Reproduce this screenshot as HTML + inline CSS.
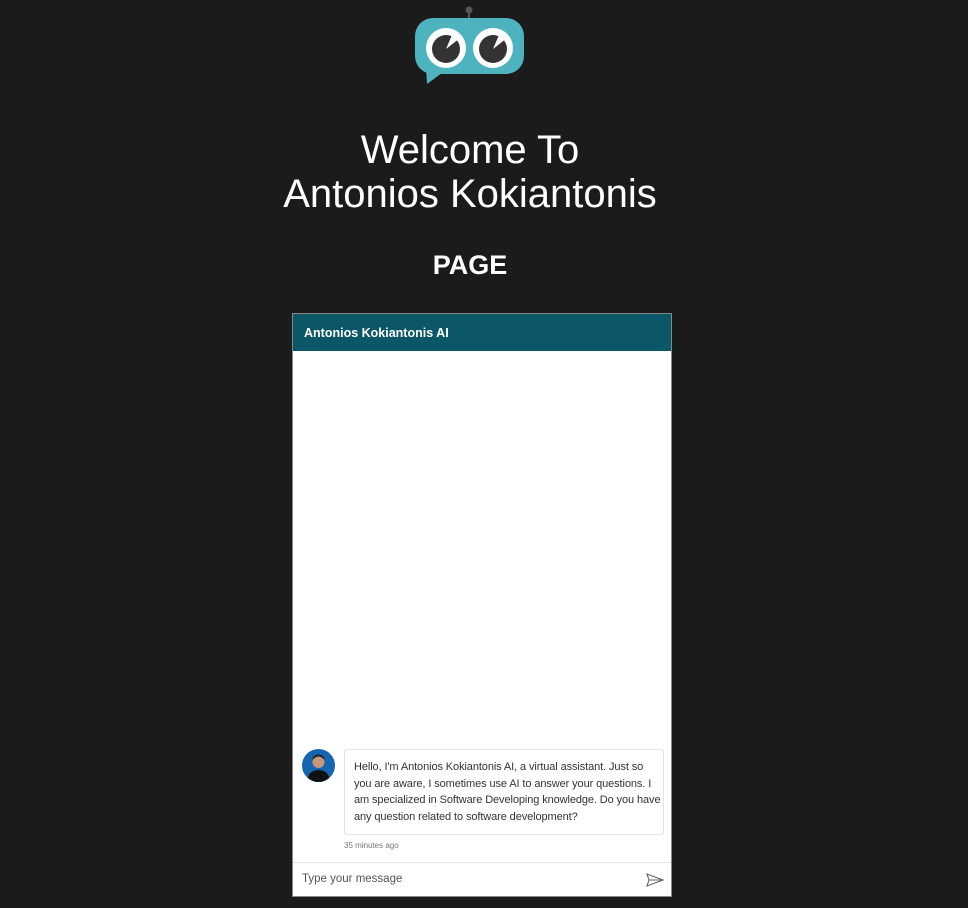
<!DOCTYPE html>
<html><head><meta charset="utf-8"><style>
body{margin:0;width:968px;height:908px;background:#1b1b1b;font-family:"Liberation Sans",sans-serif;position:relative;overflow:hidden}
.h1{position:absolute;left:0;width:940px;top:128px;text-align:center;color:#fff;font-size:40px;line-height:44px}
.h2{position:absolute;left:0;width:940px;top:250px;text-align:center;color:#fff;font-size:27px;font-weight:bold}
.chat{position:absolute;left:292px;top:313px;width:378px;height:582px;background:#fff;border:1px solid #888}
.hd{height:37px;background:#0b5667;color:#fff;font-weight:bold;font-size:12.5px;line-height:38px;padding-left:11px;font-family:"Liberation Sans",sans-serif}
.av{position:absolute;left:9px;top:435px;width:33px;height:33px;border-radius:50%;background:#1565b0;overflow:hidden}
.msg{position:absolute;left:51px;top:435px;width:300px;height:66px;border:1px solid #e3e3e3;border-radius:3px;padding:9px 9px;font-size:11px;line-height:16.6px;color:#333;font-family:"Liberation Sans",sans-serif;white-space:nowrap;letter-spacing:-0.1px}
.time{position:absolute;left:51px;top:527px;font-size:8px;color:#777;font-family:"Liberation Sans",sans-serif}
.inp{position:absolute;left:0;top:548px;width:378px;height:34px;border-top:1px solid #e3e3e3}
.inp span{position:absolute;left:9px;top:10px;font-size:11.5px;color:#555;font-family:"Liberation Sans",sans-serif}
</style></head><body>
<svg style="position:absolute;left:414px;top:4px" width="112" height="80" viewBox="0 0 112 80">
<line x1="55" y1="4" x2="55" y2="14" stroke="#555" stroke-width="2"/><circle cx="55" cy="6" r="3.5" fill="#555"/>
<rect x="1" y="14" width="109" height="56" rx="18" fill="#4db3bf"/>
<path d="M12 62 L13 80 L32 66 Z" fill="#4db3bf"/>
<circle cx="32" cy="44" r="20" fill="#fff"/><circle cx="32" cy="45" r="14" fill="#333"/>
<path d="M32 45 L46 34 L38 31Z" fill="#fff"/>
<circle cx="79" cy="44" r="20" fill="#fff"/><circle cx="79" cy="45" r="14" fill="#333"/>
<path d="M79 45 L93 34 L85 31Z" fill="#fff"/>
</svg>
<div class="h1">Welcome To<br>Antonios Kokiantonis</div>
<div class="h2">PAGE</div>
<div class="chat">
<div class="hd">Antonios Kokiantonis AI</div>
<div class="av"><svg width="33" height="33"><circle cx="16.5" cy="13" r="6" fill="#c9967a"/><path d="M5 33 Q6 21 16.5 21 Q27 21 28 33Z" fill="#111"/><path d="M10.5 11 Q16.5 4 22.5 11 L22 8 Q16.5 3 11 8Z" fill="#222"/></svg></div>
<div class="msg">Hello, I'm Antonios Kokiantonis AI, a virtual assistant. Just so<br>you are aware, I sometimes use AI to answer your questions. I<br>am specialized in Software Developing knowledge. Do you have<br>any question related to software development?</div>
<div class="time">35 minutes ago</div>
<div class="inp"><span>Type your message</span>
<svg style="position:absolute;left:353px;top:10px" width="18" height="14" viewBox="0 0 18 14"><path d="M1 1 L17 7 L1 13 L3 7 Z M3 7 L17 7" fill="none" stroke="#666" stroke-width="1.1"/></svg></div>
</div>
</body></html>
